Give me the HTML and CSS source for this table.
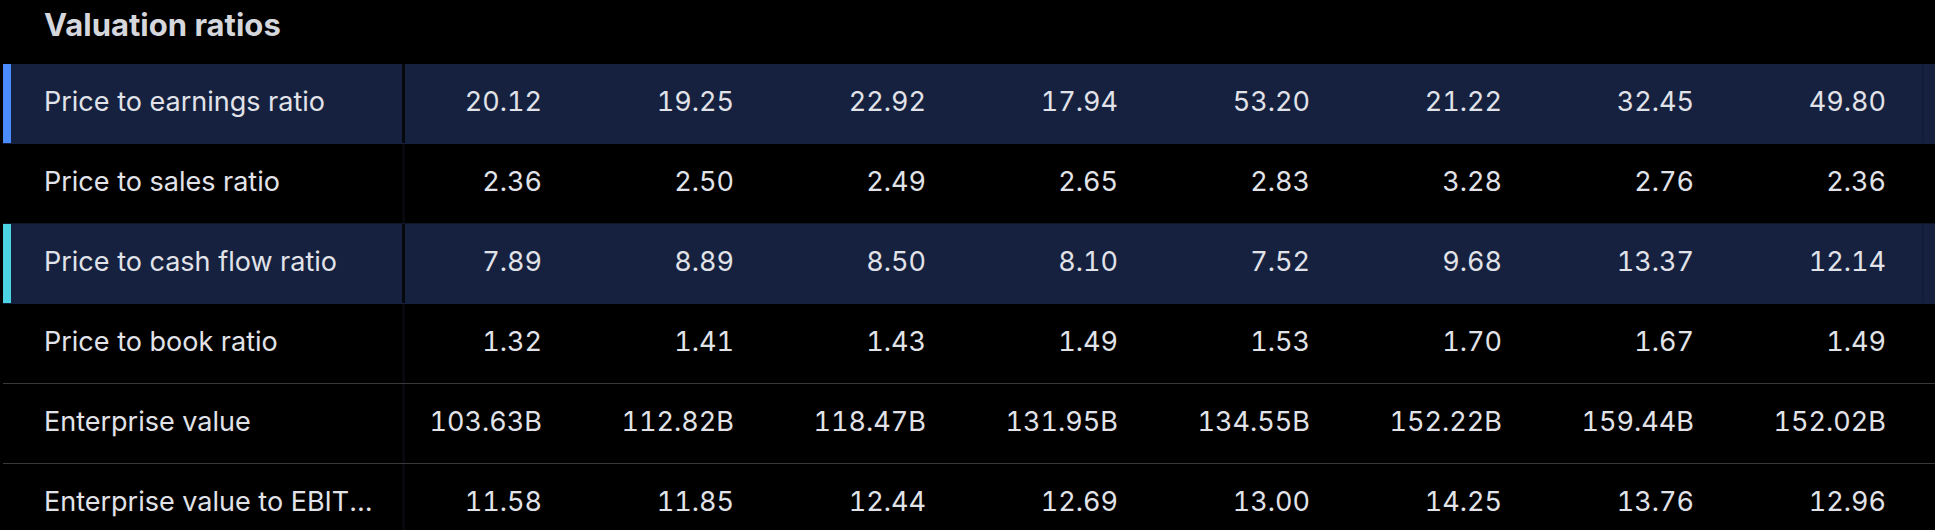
FILE: index.html
```html
<!DOCTYPE html>
<html lang="en">
<head>
<meta charset="utf-8">
<title>Valuation ratios</title>
<link rel="stylesheet" href="styles.css">
</head>
<body>
<section class="panel">
  <h2 class="title">Valuation ratios</h2>
  <div class="table">
    <div class="row hl accent-blue">
      <div class="label"><span class="label-text">Price to earnings ratio</span></div>
      <div class="num">20.12</div><div class="num">19.25</div><div class="num">22.92</div><div class="num">17.94</div><div class="num">53.20</div><div class="num">21.22</div><div class="num">32.45</div><div class="num">49.80</div>
      <div class="edge"></div>
    </div>
    <div class="row before-hl">
      <div class="label"><span class="label-text">Price to sales ratio</span></div>
      <div class="num">2.36</div><div class="num">2.50</div><div class="num">2.49</div><div class="num">2.65</div><div class="num">2.83</div><div class="num">3.28</div><div class="num">2.76</div><div class="num">2.36</div>
      <div class="edge"></div>
    </div>
    <div class="row hl accent-cyan">
      <div class="label"><span class="label-text">Price to cash flow ratio</span></div>
      <div class="num">7.89</div><div class="num">8.89</div><div class="num">8.50</div><div class="num">8.10</div><div class="num">7.52</div><div class="num">9.68</div><div class="num">13.37</div><div class="num">12.14</div>
      <div class="edge"></div>
    </div>
    <div class="row">
      <div class="label"><span class="label-text">Price to book ratio</span></div>
      <div class="num">1.32</div><div class="num">1.41</div><div class="num">1.43</div><div class="num">1.49</div><div class="num">1.53</div><div class="num">1.70</div><div class="num">1.67</div><div class="num">1.49</div>
      <div class="edge"></div>
    </div>
    <div class="row">
      <div class="label"><span class="label-text">Enterprise value</span></div>
      <div class="num">103.63B</div><div class="num">112.82B</div><div class="num">118.47B</div><div class="num">131.95B</div><div class="num">134.55B</div><div class="num">152.22B</div><div class="num">159.44B</div><div class="num">152.02B</div>
      <div class="edge"></div>
    </div>
    <div class="row">
      <div class="label"><span class="label-text">Enterprise value to EBITDA ratio</span></div>
      <div class="num">11.58</div><div class="num">11.85</div><div class="num">12.44</div><div class="num">12.69</div><div class="num">13.00</div><div class="num">14.25</div><div class="num">13.76</div><div class="num">12.96</div>
      <div class="edge"></div>
    </div>
  </div>
</section>
</body>
</html>
```
FILE: styles.css
```css
* { box-sizing: border-box; }

html, body {
  margin: 0;
  padding: 0;
  background: #000;
  overflow: hidden;
}

body {
  font-family: Inter, "Noto Sans", "Liberation Sans", sans-serif;
  color: #e1e3e9;
}

.panel {
  padding-left: 3px;
}

.title {
  margin: 0;
  padding: 7px 0 0 41px;
  height: 64px;
  font-size: 31px;
  line-height: 36px;
  font-weight: 700;
  color: #d5d7dd;
}

.row {
  display: grid;
  grid-template-columns: 402px 173px repeat(7, 192px) 1fr;
  height: 80px;
  border-bottom: 1px solid #38383d;
  font-size: 27px;
}

.row.hl {
  background: #15213f;
  border-bottom-color: #15213f;
}

.row.before-hl {
  border-bottom-color: #101628;
}

.label {
  display: flex;
  align-items: center;
  min-width: 0;
  padding: 0 16px 5px 33px;
  border-left: 8px solid transparent;
  border-right: 3px solid #07080b;
}

.label-text {
  min-width: 0;
  white-space: nowrap;
  overflow: hidden;
  text-overflow: ellipsis;
}

.accent-blue .label { border-left-color: #4a8cff; }
.accent-cyan .label { border-left-color: #4dd4e4; }

.num {
  display: flex;
  align-items: center;
  justify-content: flex-end;
  padding: 0 36px 5px 0;
  white-space: nowrap;
  font-variant-numeric: tabular-nums;
}

.edge {
  border-left: 2px solid rgba(0, 0, 0, 0.14);
}
```
